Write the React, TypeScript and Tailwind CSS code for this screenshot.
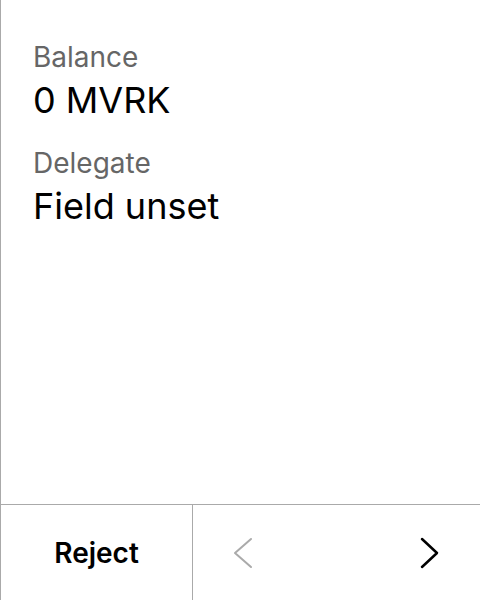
const Field = ({ label, value }: { label: string; value: string }) => (
  <div className="flex flex-col">
    <span className="text-[28px] leading-[32px] text-[#666666]">{label}</span>
    <span className="mt-[5px] text-[36px] leading-[44px] text-black">{value}</span>
  </div>
);

const Chevron = ({ dir, className }: { dir: "left" | "right"; className: string }) => (
  <svg width="20" height="32" viewBox="0 0 20 32" fill="none" className={className}>
    <polyline
      points={dir === "left" ? "18,2 2,16 18,30" : "3,2 18,16 3,30"}
      stroke="currentColor"
      strokeWidth={dir === "left" ? 2 : 2.5}
      strokeLinecap="round"
      strokeLinejoin="round"
    />
  </svg>
);

export default function App() {
  return (
    <div
      className="flex flex-col w-[480px] h-[600px] bg-white border-l border-[#aaaaaa]"
      style={{ fontFamily: "Inter, 'Noto Sans', sans-serif" }}
    >
      <div className="flex-1 flex flex-col gap-[25px] pl-[32px] pt-[41px]">
        <Field label="Balance" value="0 MVRK" />
        <Field label="Delegate" value="Field unset" />
      </div>
      <div className="flex h-[96px] border-t border-[#aaaaaa]">
        <button className="w-[192px] flex items-center justify-center text-[28px] font-semibold text-black border-r border-[#aaaaaa]">
          Reject
        </button>
        <div className="flex-1 flex items-center justify-between pl-[40px] pr-[41px]">
          <Chevron dir="left" className="text-[#aaaaaa]" />
          <Chevron dir="right" className="text-black" />
        </div>
      </div>
    </div>
  );
}
